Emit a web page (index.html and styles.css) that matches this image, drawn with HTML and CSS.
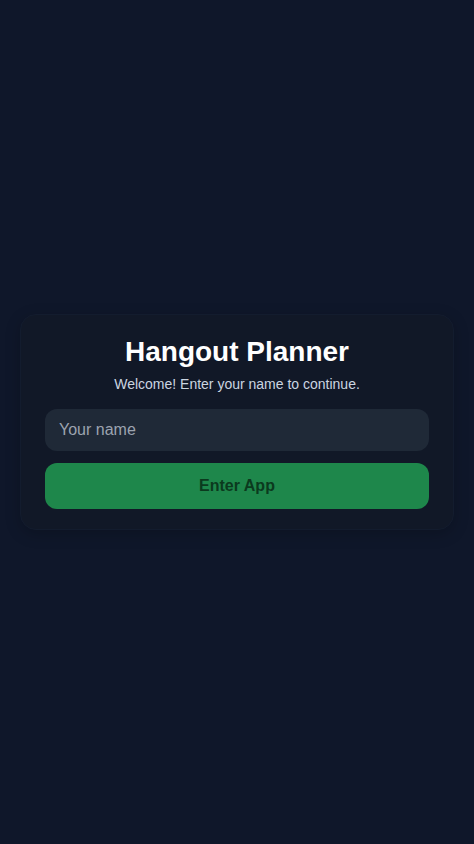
FILE: index.html
```html
<!DOCTYPE html>
<html lang="en">
<head>
<meta charset="utf-8">
<meta name="viewport" content="width=device-width, initial-scale=1">
<title>Hangout Planner</title>
<link rel="stylesheet" href="styles.css">
</head>
<body>
<main class="screen">
  <section class="card">
    <h1 class="title">Hangout Planner</h1>
    <p class="subtitle">Welcome! Enter your name to continue.</p>
    <input class="name-input" type="text" placeholder="Your name">
    <button class="enter-btn" type="button">Enter App</button>
  </section>
</main>
</body>
</html>
```
FILE: styles.css
```css
* { box-sizing: border-box; }
html, body {
  margin: 0;
  height: 100%;
  background: #0f172a;
  font-family: "Liberation Sans", Arial, sans-serif;
}
.screen {
  min-height: 100vh;
  display: flex;
  align-items: center;
  justify-content: center;
  padding: 0 20px;
}
.card {
  width: 100%;
  background: #111827;
  border: 1px solid #131c2e;
  border-radius: 16px;
  padding: 20px 24px 20px;
  display: flex;
  flex-direction: column;
  box-shadow: 0 4px 16px rgba(0,0,0,0.2);
}
.title {
  margin: 0;
  text-align: center;
  color: #ffffff;
  font-size: 28px;
  line-height: 34px;
  font-weight: 700;
}
.subtitle {
  margin: 6px 0 16px;
  text-align: center;
  color: #cbd5e1;
  font-size: 14px;
  line-height: 18px;
}
.name-input {
  width: 100%;
  height: 42px;
  border: none;
  border-radius: 12px;
  background: #1f2937;
  color: #e5e7eb;
  padding: 0 14px;
  font-family: inherit;
  font-size: 16px;
  outline: none;
}
.name-input::placeholder { color: #9ca3af; }
.enter-btn {
  margin-top: 12px;
  width: 100%;
  height: 46px;
  border: none;
  border-radius: 12px;
  background: #1e874b;
  color: #0b3a1e;
  font-family: inherit;
  font-size: 16px;
  font-weight: 700;
}
```
